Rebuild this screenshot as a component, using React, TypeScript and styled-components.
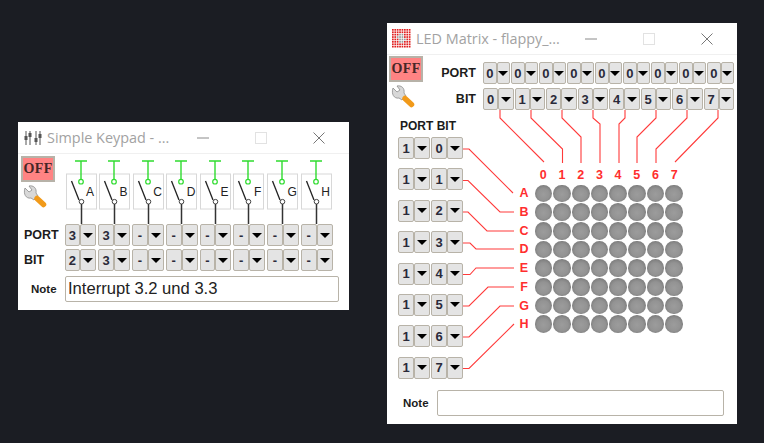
import React from "react";
import styled, { createGlobalStyle } from "styled-components";

const GlobalStyle = createGlobalStyle`
  html, body {
    margin: 0;
    padding: 0;
    background: #1b1d23;
  }
  * { box-sizing: border-box; }
`;

const Desktop = styled.div`
  position: relative;
  width: 764px;
  height: 443px;
  overflow: hidden;
  background: #1b1d23;
  font-family: "Liberation Sans", Arial, sans-serif;
`;

const Window = styled.div<{ $x: number; $y: number; $w: number; $h: number }>`
  position: absolute;
  left: ${p => p.$x}px;
  top: ${p => p.$y}px;
  width: ${p => p.$w}px;
  height: ${p => p.$h}px;
  background: #fff;
  display: flex;
  flex-direction: column;
`;

const TitleBar = styled.div`
  height: 31px;
  flex: none;
  display: flex;
  align-items: center;
  padding-left: 5px;
`;

const TitleText = styled.span`
  margin-left: 5px;
  font-family: "Open Sans", sans-serif;
  font-size: 14.4px;
  color: #a2a2a2;
  white-space: nowrap;
`;

const Controls = styled.div`
  margin-left: auto;
  margin-right: 24px;
  display: flex;
  align-items: center;
  gap: 46px;
`;

const Body = styled.div<{ $pt: number }>`
  position: relative;
  flex: 1;
  border-top: 1px solid #f0f0f0;
  padding-top: ${p => p.$pt}px;
`;

const SideColumn = styled.div`
  flex: none;
  width: 34px;
  display: flex;
  flex-direction: column;
  align-items: flex-start;
`;

const PowerButton = styled.div`
  width: 34px;
  height: 26px;
  background: #ff8383;
  border: 2px solid #b7b2a8;
  font-family: "Liberation Serif", serif;
  font-weight: 700;
  font-size: 14px;
  letter-spacing: 0.4px;
  line-height: 22px;
  text-align: center;
  color: #452626;
`;

const WrenchSlot = styled.div`
  margin: 3px 0 0 2px;
  width: 24px;
  height: 24px;
`;

/* keypad */

const KeypadTop = styled.div`
  display: flex;
  padding-left: 3px;
`;

const KeyRow = styled.div`
  margin-left: 9.5px;
  display: grid;
  grid-template-columns: repeat(8, 33.6px);
  height: 68px;
`;

const KeyCell = styled.div`
  position: relative;
  height: 68px;
`;

const KeyLetter = styled.span`
  position: absolute;
  left: 21.5px;
  top: 29px;
  font-size: 12px;
  line-height: 14px;
  color: #222;
`;

const FormRow = styled.div`
  display: flex;
  align-items: center;
  padding-left: 6px;
  margin-bottom: 3px;
`;

const RowLabel = styled.div<{ $w: number; $align?: string }>`
  flex: none;
  width: ${p => p.$w}px;
  text-align: ${p => p.$align || "left"};
  font-weight: 700;
  font-size: 12.5px;
  color: #1c1c1c;
`;

const ComboGrid = styled.div<{ $cols: number; $w: number; $gap: number; $ml?: number }>`
  display: grid;
  grid-template-columns: repeat(${p => p.$cols}, 1fr);
  column-gap: ${p => p.$gap}px;
  width: ${p => p.$w}px;
  margin-left: ${p => p.$ml || 0}px;
`;

const ComboBox = styled.div`
  display: grid;
  grid-template-columns: 1fr 1fr;
  height: 22px;
`;

const ComboCell = styled.div`
  display: flex;
  align-items: center;
  justify-content: center;
  background: #e4e4e4;
  border: 1.5px solid #b8b3a8;
  border-radius: 2px;
  font-weight: 700;
  font-size: 13px;
  color: #2a2a3a;
  min-width: 0;
`;

const Arrow = styled.span`
  width: 0;
  height: 0;
  border-left: 5px solid transparent;
  border-right: 5px solid transparent;
  border-top: 5px solid #000;
`;

const NoteRow = styled.div<{ $pl: number; $mt: number }>`
  display: flex;
  align-items: center;
  padding-left: ${p => p.$pl}px;
  margin-top: ${p => p.$mt}px;
`;

const NoteLabel = styled.label<{ $w: number }>`
  flex: none;
  width: ${p => p.$w}px;
  font-weight: 700;
  font-size: 11.5px;
  color: #1c1c1c;
`;

const NoteInput = styled.input<{ $w: number }>`
  width: ${p => p.$w}px;
  height: 26px;
  padding: 0 2px;
  background: #fff;
  border: 1.5px solid #b8b3a8;
  border-radius: 2px;
  outline: none;
  font-family: "Liberation Sans", Arial, sans-serif;
  font-size: 16.6px;
  color: #222;
`;

/* led matrix */

const MatrixTop = styled.div`
  display: flex;
  padding-left: 2px;
`;

const PortColumn = styled.div`
  margin-top: 6px;
  display: flex;
  flex-direction: column;
  gap: 4px;
`;

const PortRow = styled.div`
  display: flex;
  align-items: center;
`;

const MatrixLower = styled.div`
  display: flex;
  margin-top: 8px;
`;

const ChannelColumn = styled.div`
  flex: none;
  width: 127px;
  padding-left: 11px;
`;

const ChannelHeader = styled.div`
  height: 16px;
  margin-left: 2px;
  margin-bottom: 3px;
  font-weight: 700;
  font-size: 12px;
  line-height: 16px;
  color: #1c1c1c;
  white-space: nowrap;
`;

const ChannelList = styled.div`
  display: flex;
  flex-direction: column;
  gap: 9.4px;
`;

const LedGrid = styled.div`
  margin-top: 47.4px;
  display: grid;
  grid-template-columns: 20px repeat(8, 18.7px);
  grid-auto-rows: 18.7px;
  align-items: center;
  justify-items: center;
  height: 168px;
`;

const RedLabel = styled.span`
  font-weight: 700;
  font-size: 12.5px;
  color: #ff2e2e;
`;

const Led = styled.div`
  width: 17.6px;
  height: 17.6px;
  border-radius: 50%;
  background: radial-gradient(circle at 50% 55%, #9c9c9c 0%, #939393 45%, #7f7f7f 72%, #a2a2a2 96%, #bcbcbc 100%);
`;

const WireLayer = styled.svg`
  position: absolute;
  left: 0;
  top: 0;
  pointer-events: none;
`;

/* drawings */

function MixerIcon() {
  const cols = [3, 7, 13, 17];
  const knobs = [6, 3, 8, 4];
  return (
    <svg width="19" height="16" viewBox="0 0 19 16">
      {cols.map((x, i) => (
        <g key={x}>
          <line x1={x} y1="1" x2={x} y2="15" stroke="#555" strokeWidth="1" />
          <rect x={x - 1.5} y={knobs[i]} width="3" height="4" fill="#555" />
        </g>
      ))}
    </svg>
  );
}

function MatrixIcon() {
  const cells = Array.from({ length: 64 }, (_, i) => i);
  const off = new Set([19, 20, 27, 28, 35, 36, 43, 44, 26, 37]);
  return (
    <svg width="19" height="19" viewBox="0 0 19 19">
      {cells.map(i => (
        <rect
          key={i}
          x={(i % 8) * 2.4}
          y={Math.floor(i / 8) * 2.4}
          width="1.7"
          height="1.7"
          fill={off.has(i) ? "#999" : "#e02020"}
        />
      ))}
    </svg>
  );
}

function WrenchIcon() {
  return (
    <svg width="24" height="24" viewBox="0 0 24 24">
      <path
        d="M2 3 L6 7 L9 5 L6 1 C10 0 14 3 13 8 L15 11 L11 15 L8 13 C3 14 0 9 2 3 Z"
        fill="#d8d8d8"
        stroke="#8c8c8c"
        strokeWidth="0.8"
      />
      <line x1="14" y1="13.5" x2="20.5" y2="19.5" stroke="#f19a1a" strokeWidth="5.5" strokeLinecap="round" />
    </svg>
  );
}

function WindowButtons() {
  return (
    <Controls>
      <svg width="12" height="12" viewBox="0 0 12 12">
        <line x1="0" y1="6" x2="12" y2="6" stroke="#8a8a8a" />
      </svg>
      <svg width="12" height="12" viewBox="0 0 12 12">
        <rect x="0.5" y="0.5" width="11" height="11" fill="none" stroke="#e2e2e2" />
      </svg>
      <svg width="12" height="12" viewBox="0 0 12 12">
        <path d="M0.5 0.5 L11.5 11.5 M11.5 0.5 L0.5 11.5" stroke="#777" fill="none" />
      </svg>
    </Controls>
  );
}

function KeySwitch() {
  return (
    <svg width="33" height="68" viewBox="0 0 33 68">
      <rect x="1.5" y="18" width="30" height="35" fill="#fff" stroke="#d8d8d8" />
      <path d="M10 5 H22 M16 5 V23" stroke="#2fdc2f" strokeWidth="1.4" fill="none" />
      <circle cx="16" cy="25.7" r="2.3" fill="#fff" stroke="#2fdc2f" strokeWidth="1.2" />
      <path d="M6.5 25 L14 44" stroke="#222" strokeWidth="1.3" fill="none" />
      <circle cx="16.5" cy="45.7" r="2.3" fill="#fff" stroke="#444" strokeWidth="1" />
      <line x1="16.5" y1="48" x2="16.5" y2="68" stroke="#333" strokeWidth="1.5" />
    </svg>
  );
}

function Combo({ value }: { value: string }) {
  return (
    <ComboBox>
      <ComboCell>{value}</ComboCell>
      <ComboCell>
        <Arrow />
      </ComboCell>
    </ComboBox>
  );
}

const KEYS = ["A", "B", "C", "D", "E", "F", "G", "H"];
const KEY_PORTS = ["3", "3", "-", "-", "-", "-", "-", "-"];
const KEY_BITS = ["2", "3", "-", "-", "-", "-", "-", "-"];
const BITS = ["0", "1", "2", "3", "4", "5", "6", "7"];

// wire routes in page coordinates, the layer's viewBox starts at the window corner
const BIT_WIRES = [
  "M500 110 V118 L544 162",
  "M531 110 V118 L562.5 149 V163",
  "M562 110 V118 L581 137 V163",
  "M593 110 V118 L600 124 V163",
  "M625 110 V118 L619 124 V163",
  "M656 110 V118 L637 137 V163",
  "M687 110 V118 L656 149 V163",
  "M718 110 V118 L675 162",
];

const ROW_WIRES = [
  "M463 149 H469 L513 193",
  "M463 180.5 H468 L500 212 H514",
  "M463 212 H468 L487 231 H514",
  "M463 243 H470 L476 249 H514",
  "M463 274.5 H470 L476 268 H514",
  "M463 306 H469 L488 287 H514",
  "M463 337 H469 L500 306 H514",
  "M463 368.5 H469 L514 324",
];

export default function App() {
  return (
    <Desktop>
      <GlobalStyle />

      <Window $x={18} $y={122} $w={331} $h={188}>
        <TitleBar>
          <MixerIcon />
          <TitleText>Simple Keypad - ...</TitleText>
          <WindowButtons />
        </TitleBar>
        <Body $pt={2}>
          <KeypadTop>
            <SideColumn>
              <PowerButton>OFF</PowerButton>
              <WrenchSlot>
                <WrenchIcon />
              </WrenchSlot>
            </SideColumn>
            <KeyRow>
              {KEYS.map(k => (
                <KeyCell key={k}>
                  <KeySwitch />
                  <KeyLetter>{k}</KeyLetter>
                </KeyCell>
              ))}
            </KeyRow>
          </KeypadTop>
          <FormRow>
            <RowLabel $w={40.5}>PORT</RowLabel>
            <ComboGrid $cols={8} $w={268} $gap={2}>
              {KEY_PORTS.map((v, i) => (
                <Combo key={i} value={v} />
              ))}
            </ComboGrid>
          </FormRow>
          <FormRow>
            <RowLabel $w={40.5}>BIT</RowLabel>
            <ComboGrid $cols={8} $w={268} $gap={2}>
              {KEY_BITS.map((v, i) => (
                <Combo key={i} value={v} />
              ))}
            </ComboGrid>
          </FormRow>
          <NoteRow $pl={13} $mt={5}>
            <NoteLabel $w={34}>Note</NoteLabel>
            <NoteInput $w={274} value="Interrupt 3.2 und 3.3" readOnly />
          </NoteRow>
        </Body>
      </Window>

      <Window $x={387} $y={23} $w={350} $h={401}>
        <TitleBar>
          <MatrixIcon />
          <TitleText>LED Matrix - flappy_...</TitleText>
          <WindowButtons />
        </TitleBar>
        <Body $pt={1}>
          <WireLayer width="350" height="370" viewBox="387 55 350 370">
            {BIT_WIRES.concat(ROW_WIRES).map(d => (
              <path key={d} d={d} fill="none" stroke="#ff3a3a" strokeWidth="1.1" />
            ))}
          </WireLayer>
          <MatrixTop>
            <SideColumn>
              <PowerButton>OFF</PowerButton>
              <WrenchSlot>
                <WrenchIcon />
              </WrenchSlot>
            </SideColumn>
            <PortColumn>
              <PortRow>
                <RowLabel $w={53} $align="right">PORT</RowLabel>
                <ComboGrid $cols={9} $w={251} $gap={1} $ml={7}>
                  {Array.from({ length: 9 }, (_, i) => (
                    <Combo key={i} value="0" />
                  ))}
                </ComboGrid>
              </PortRow>
              <PortRow>
                <RowLabel $w={53} $align="right">BIT</RowLabel>
                <ComboGrid $cols={8} $w={251} $gap={1} $ml={7}>
                  {BITS.map(b => (
                    <Combo key={b} value={b} />
                  ))}
                </ComboGrid>
              </PortRow>
            </PortColumn>
          </MatrixTop>
          <MatrixLower>
            <ChannelColumn>
              <ChannelHeader>PORT BIT</ChannelHeader>
              <ChannelList>
                {BITS.map(b => (
                  <ComboGrid key={b} $cols={2} $w={65} $gap={1}>
                    <Combo value="1" />
                    <Combo value={b} />
                  </ComboGrid>
                ))}
              </ChannelList>
            </ChannelColumn>
            <LedGrid>
              <span />
              {BITS.map(b => (
                <RedLabel key={b}>{b}</RedLabel>
              ))}
              {KEYS.map(k => (
                <React.Fragment key={k}>
                  <RedLabel>{k}</RedLabel>
                  {BITS.map(b => (
                    <Led key={b} />
                  ))}
                </React.Fragment>
              ))}
            </LedGrid>
          </MatrixLower>
          <NoteRow $pl={16} $mt={11}>
            <NoteLabel $w={34}>Note</NoteLabel>
            <NoteInput $w={287} readOnly value="" />
          </NoteRow>
        </Body>
      </Window>
    </Desktop>
  );
}
